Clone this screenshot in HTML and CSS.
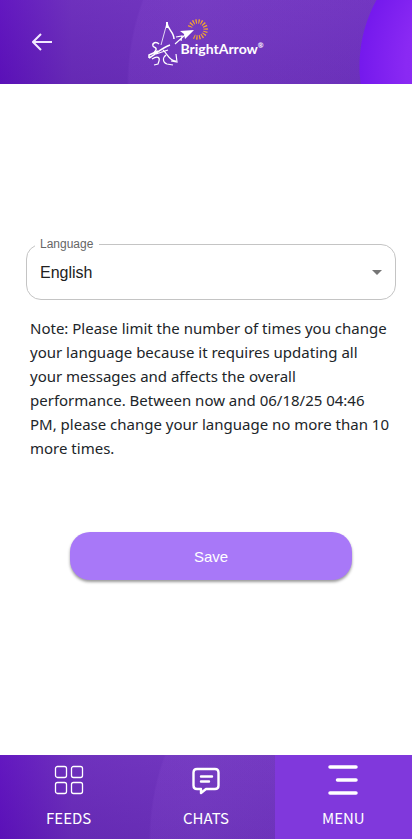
FILE: index.html
```html
<!DOCTYPE html>
<html lang="en">
<head>
<meta charset="utf-8">
<meta name="viewport" content="width=device-width, initial-scale=1">
<title>Language</title>
<link rel="stylesheet" href="styles.css">
</head>
<body>
<header class="topbar">
  <a class="back" href="#" aria-label="Back">
    <svg width="20" height="18" viewBox="0 0 20 18" fill="none" stroke="currentColor" stroke-width="2"><path d="M20 9H1M9 1L1 9l8 8"/></svg>
  </a>
  <div class="brand">
    <svg class="archer" width="60" height="48" viewBox="0 0 60 48" fill="none" stroke="#fff">
      <path stroke-width="0.800" d="M19 5L13 27"/>
      <path stroke-width="1.500" d="M19 5c1 7 7 9 7 16"/>
      <path stroke-width="2" d="M19 4v6"/>
      <path stroke-width="1.100" d="M27 26l10-9M28 19l6-1-1 5"/>
      <path fill="#fff" stroke="none" d="M46 12L32 13l4 3 1 5z"/>
      <path stroke-width="1.400" d="M11 26c-3-3-7-1-6 2 1 2 4 1 3 4l-2 3"/>
      <path stroke-width="1.500" d="M1 40c6-3 12-10 21-13M1 40v-3l9-4"/>
      <path stroke-width="1.200" d="M8 36l12-4M4 41c6-4 8-1 7 2l-1 3-4 1M15 32c4 3 6 11 13 11M28 36l1 8-6-1M18 37c-4 3-3 8 1 9l6 1"/>
      <path stroke="#f5a62f" stroke-width="4.500" stroke-dasharray="1.200 1.500" d="M42 9A8 8 0 1 1 46 18.500"/>
    </svg>
    <span class="name">BrightArrow<sup>®</sup></span>
  </div>
</header>
<main class="content">
  <div class="field">
    <label for="language">Language</label>
    <select id="language"><option>English</option></select>
    <svg class="caret" width="10" height="5" viewBox="0 0 10 5"><path fill="#757575" d="M0 0h10L5 5z"/></svg>
  </div>
  <p class="note">Note: Please limit the number of times you change your language because it requires updating all your messages and affects the overall performance. Between now and 06/18/25 04:46 PM, please change your language no more than 10 more times.</p>
  <button class="save" type="button">Save</button>
</main>
<nav class="tabs">
  <a href="#">
    <svg width="30" height="30" viewBox="0 0 30 30" fill="none" stroke="currentColor" stroke-width="1.300"><rect x="1.500" y="1.500" width="11" height="11" rx="2"/><rect x="17.500" y="1.500" width="11" height="11" rx="2"/><rect x="1.500" y="17.500" width="11" height="11" rx="2"/><rect x="17.500" y="17.500" width="11" height="11" rx="2"/></svg>
    <span>FEEDS</span>
  </a>
  <a href="#">
    <svg width="30" height="30" viewBox="0 0 30 30" fill="none" stroke="currentColor" stroke-width="2.400" stroke-linejoin="round" stroke-linecap="round"><path d="M6 4h18q3.500 0 3.500 3.500v13q0 3.500-3.500 3.500h-9l-5 4v-4H6q-3.500 0-3.500-3.500v-13Q2.500 4 6 4z"/><path d="M10 11.500h11M10 16.500h8"/></svg>
    <span>CHATS</span>
  </a>
  <a class="active" href="#" aria-current="page">
    <svg width="30" height="30" viewBox="0 0 30 30" fill="none" stroke="currentColor" stroke-width="3.500" stroke-linecap="round"><path d="M2 2h26M9.500 15H28M2 28h26"/></svg>
    <span>MENU</span>
  </a>
</nav>
</body>
</html>
```
FILE: styles.css
```css
* { box-sizing: border-box; }

body {
  margin: 0;
  min-height: 100vh;
  display: flex;
  flex-direction: column;
  background: #fff;
  color: #212529;
  font-family: "Noto Sans", "Open Sans", sans-serif;
}

.topbar {
  height: 84px;
  display: grid;
  grid-template-columns: 1fr auto 1fr;
  align-items: center;
  color: #fff;
  background:
    radial-gradient(circle at 496px 66px, #9333f5 0, #8a29f3 90px, #7519ed 136px, transparent 137px),
    radial-gradient(circle at 368px 84px, rgba(150, 90, 220, 0.14) 239px, transparent 241px),
    linear-gradient(180deg, rgba(120, 60, 200, 0.3), rgba(90, 35, 170, 0.3)),
    linear-gradient(90deg, #5a08bd 0, #6a2cb8 72px, #6e35ba 200px, #672ab8 100%);
}

.back {
  display: flex;
  margin-left: 32px;
  color: #f2e9ff;
  justify-self: start;
}

.brand {
  display: flex;
  align-items: center;
}

.archer { flex: none; }

.name {
  margin: 14px 0 0 -28px;
  font: 700 14px/20px Lato, sans-serif;
}

.name sup {
  font-size: 7px;
  line-height: 0;
}

.content {
  flex: 1;
  display: flex;
  flex-direction: column;
  padding: 160px 16px 0 26px;
}

.field { position: relative; }

.field label {
  position: absolute;
  top: -8px;
  left: 9px;
  padding: 0 6px 0 5px;
  background: #fff;
  color: #666;
  font: 12px/16px "Liberation Sans", sans-serif;
}

.field select {
  display: block;
  width: 100%;
  height: 56px;
  padding: 0 32px 0 13px;
  appearance: none;
  border: 1px solid #c4c4c4;
  border-radius: 15px;
  background: #fff;
  color: #212121;
  font: 16px "Liberation Sans", sans-serif;
}

.caret {
  position: absolute;
  top: 26px;
  right: 14px;
  pointer-events: none;
}

.note {
  margin: 16px 4px 0 4px;
  font-size: 15px;
  line-height: 24px;
}

.save {
  height: 48px;
  margin: 72px 44px 24px;
  border: 0;
  border-radius: 20px;
  background: #a878f8;
  color: #fff;
  font: 15px "Liberation Sans", sans-serif;
  box-shadow: 0 2px 3px rgba(0, 0, 0, 0.4);
}

.tabs {
  display: grid;
  grid-template-columns: repeat(3, 1fr);
  height: 84px;
  background:
    radial-gradient(circle at 390px 84px, rgba(150, 90, 220, 0.14) 239px, transparent 241px),
    linear-gradient(180deg, rgba(120, 60, 200, 0.3), rgba(90, 35, 170, 0.3)),
    linear-gradient(90deg, #5a08bd 0, #6a2cb8 72px, #6e35ba 200px, #672ab8 100%);
}

.tabs a {
  display: flex;
  flex-direction: column;
  align-items: center;
  gap: 11px;
  padding-top: 10px;
  color: #fff;
  font: 15px/24px "Noto Sans CJK SC", sans-serif;
  text-decoration: none;
}

.tabs .active { background: #8038dc; }
```
